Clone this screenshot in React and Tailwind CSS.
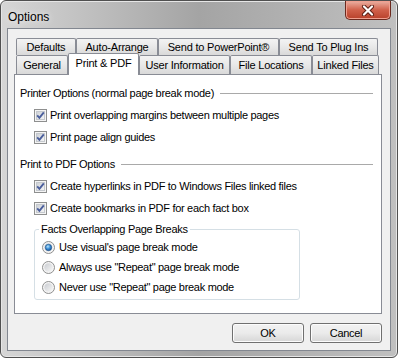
import React from "react";

const FONT = { fontFamily: '"Liberation Sans", Arial, sans-serif' };

const CheckBox = () => (
  <svg width="13" height="13" viewBox="0 0 13 13" className="shrink-0">
    <defs>
      <linearGradient id="cbIn" x1="0" y1="0" x2="1" y2="1">
        <stop offset="0" stopColor="#cbcfd5" />
        <stop offset="1" stopColor="#f6f6f6" />
      </linearGradient>
    </defs>
    <rect x="0.5" y="0.5" width="12" height="12" fill="#f4f4f4" stroke="#8e8f8f" />
    <rect x="2.5" y="2.5" width="8" height="8" fill="url(#cbIn)" stroke="#c4c8cd" />
    <path d="M3.2 6.4 L5.4 8.8 L9.8 3.4" fill="none" stroke="#4a5e9c" strokeWidth="1.9" />
  </svg>
);

const Radio = ({ on }) => (
  <svg width="13" height="13" viewBox="0 0 13 13" className="shrink-0">
    <defs>
      <linearGradient id="rdIn" x1="0" y1="0" x2="1" y2="1">
        <stop offset="0" stopColor="#c9ccd1" />
        <stop offset="1" stopColor="#f7f7f7" />
      </linearGradient>
      <radialGradient id="rdOn" cx="0.4" cy="0.35" r="0.7">
        <stop offset="0" stopColor="#b9e6fd" />
        <stop offset="0.5" stopColor="#3c8fd6" />
        <stop offset="1" stopColor="#184f94" />
      </radialGradient>
    </defs>
    <circle cx="6.5" cy="6.5" r="6" fill="#f4f4f4" stroke="#8e8f8f" />
    <circle cx="6.5" cy="6.5" r="4.2" fill="url(#rdIn)" />
    {on && <circle cx="6.5" cy="6.5" r="3.2" fill="url(#rdOn)" stroke="#1b4f86" strokeWidth="0.6" />}
  </svg>
);

const Tab = ({ label, w, selected, tall }) => (
  <div
    className={`flex items-center justify-center border border-[#898c95] text-[11px] tracking-[-0.2px] text-black rounded-t-[2px] ${
      selected
        ? "relative z-10 h-[22px] mb-[-1px] border-b-0 bg-white pb-[3px]"
        : tall
        ? "h-[19px] border-b-0 bg-linear-to-b from-[#f3f3f3] via-[#e8e8e8] to-[#d9d9d9]"
        : "h-[17px] border-b-0 bg-linear-to-b from-[#f3f3f3] via-[#e8e8e8] to-[#d9d9d9]"
    }`}
    style={{ width: w }}
  >
    {label}
  </div>
);

const CheckRow = ({ label }) => (
  <div className="flex items-center h-[22px] pl-[14px] gap-[3px]">
    <CheckBox />
    <span>{label}</span>
  </div>
);

const RadioRow = ({ label, on }) => (
  <div className="flex items-center h-[20px] pl-[7px] gap-[4px]">
    <Radio on={on} />
    <span>{label}</span>
  </div>
);

const Heading = ({ label }) => (
  <div className="flex items-center h-[16px] pr-[8px] gap-[6px]">
    <span>{label}</span>
    <div className="flex-1 h-px bg-[#a9a9a9]" />
  </div>
);

const Button = ({ label }) => (
  <button className="w-[72px] h-[20px] rounded-[3px] border border-[#707070] bg-linear-to-b from-[#f2f2f2] via-[#ebebeb] to-[#d6d6d6] text-[11px] text-black shadow-[inset_0_0_0_1px_#fcfcfc]">
    {label}
  </button>
);

export default function App() {
  return (
    <div
      style={FONT}
      className="w-[398px] h-[358px] rounded-[6px] border border-[#505050] bg-linear-to-r from-[#d6d6d6] via-[#a4a4a4] to-[#c0c0c0] shadow-[inset_0_0_0_1px_#e6e6e6] overflow-hidden"
    >
      <div className="h-[27px] flex items-start justify-between">
        <span className="ml-[7px] mt-[7px] text-[12px] text-black [text-shadow:0_0_6px_#ffffff]">Options</span>
        <div className="mr-[6px] w-[46px] h-[19px] flex items-center justify-center rounded-b-[5px] border border-t-0 border-[#6b2a1f] bg-linear-to-b from-[#eab0a3] via-[#d0604a] to-[#b8402a] shadow-[inset_0_0_0_1px_#f0a090]">
          <svg width="14" height="11" viewBox="0 0 14 11">
            <path d="M3 1.5 L11 9.5 M11 1.5 L3 9.5" stroke="#5a1c12" strokeWidth="4" strokeLinecap="round" />
            <path d="M3 1.5 L11 9.5 M11 1.5 L3 9.5" stroke="#ffffff" strokeWidth="2.2" strokeLinecap="round" />
          </svg>
        </div>
      </div>

      <div className="mx-[6px] h-[323px] border border-[#828790] bg-[#f0f0f0] pt-[9px] pl-[6px] pr-[8px] text-[11px] tracking-[-0.3px] text-black">
        <div className="ml-[2px] flex flex-col">
          <div className="flex">
            <Tab label="Defaults" w={60} />
            <Tab label="Auto-Arrange" w={82} />
            <Tab label="Send to PowerPoint®" w={121} />
            <Tab label="Send To Plug Ins" w={99} />
          </div>
          <div className="flex items-end h-[19px]">
            <Tab label="General" w={52} tall />
            <Tab label="Print & PDF" w={71} selected />
            <Tab label="User Information" w={91} tall />
            <Tab label="File Locations" w={82} tall />
            <Tab label="Linked Files" w={67} tall />
          </div>
        </div>

        <div className="w-[368px] h-[240px] border border-[#898c95] bg-white pt-[10px] pl-[5px]">
          <Heading label="Printer Options (normal page break mode)" />
          <div className="mt-[3px]">
            <CheckRow label="Print overlapping margins between multiple pages" />
            <CheckRow label="Print page align guides" />
          </div>
          <div className="mt-[8px]">
            <Heading label="Print to PDF Options" />
          </div>
          <div className="mt-[3px]">
            <CheckRow label="Create hyperlinks in PDF to Windows Files linked files" />
            <CheckRow label="Create bookmarks in PDF for each fact box" />
          </div>
          <fieldset className="ml-[14px] mt-[2px] w-[266px] border border-[#d5dfe5] rounded-[3px] pb-[2px]">
            <legend className="ml-[4px] px-[2px] leading-[16px]">Facts Overlapping Page Breaks</legend>
            <RadioRow label="Use visual's page break mode" on />
            <RadioRow label={'Always use "Repeat" page break mode'} />
            <RadioRow label={'Never use "Repeat" page break mode'} />
          </fieldset>
        </div>

        <div className="mt-[9px] flex justify-end gap-[6px]">
          <Button label="OK" />
          <Button label="Cancel" />
        </div>
      </div>
    </div>
  );
}
